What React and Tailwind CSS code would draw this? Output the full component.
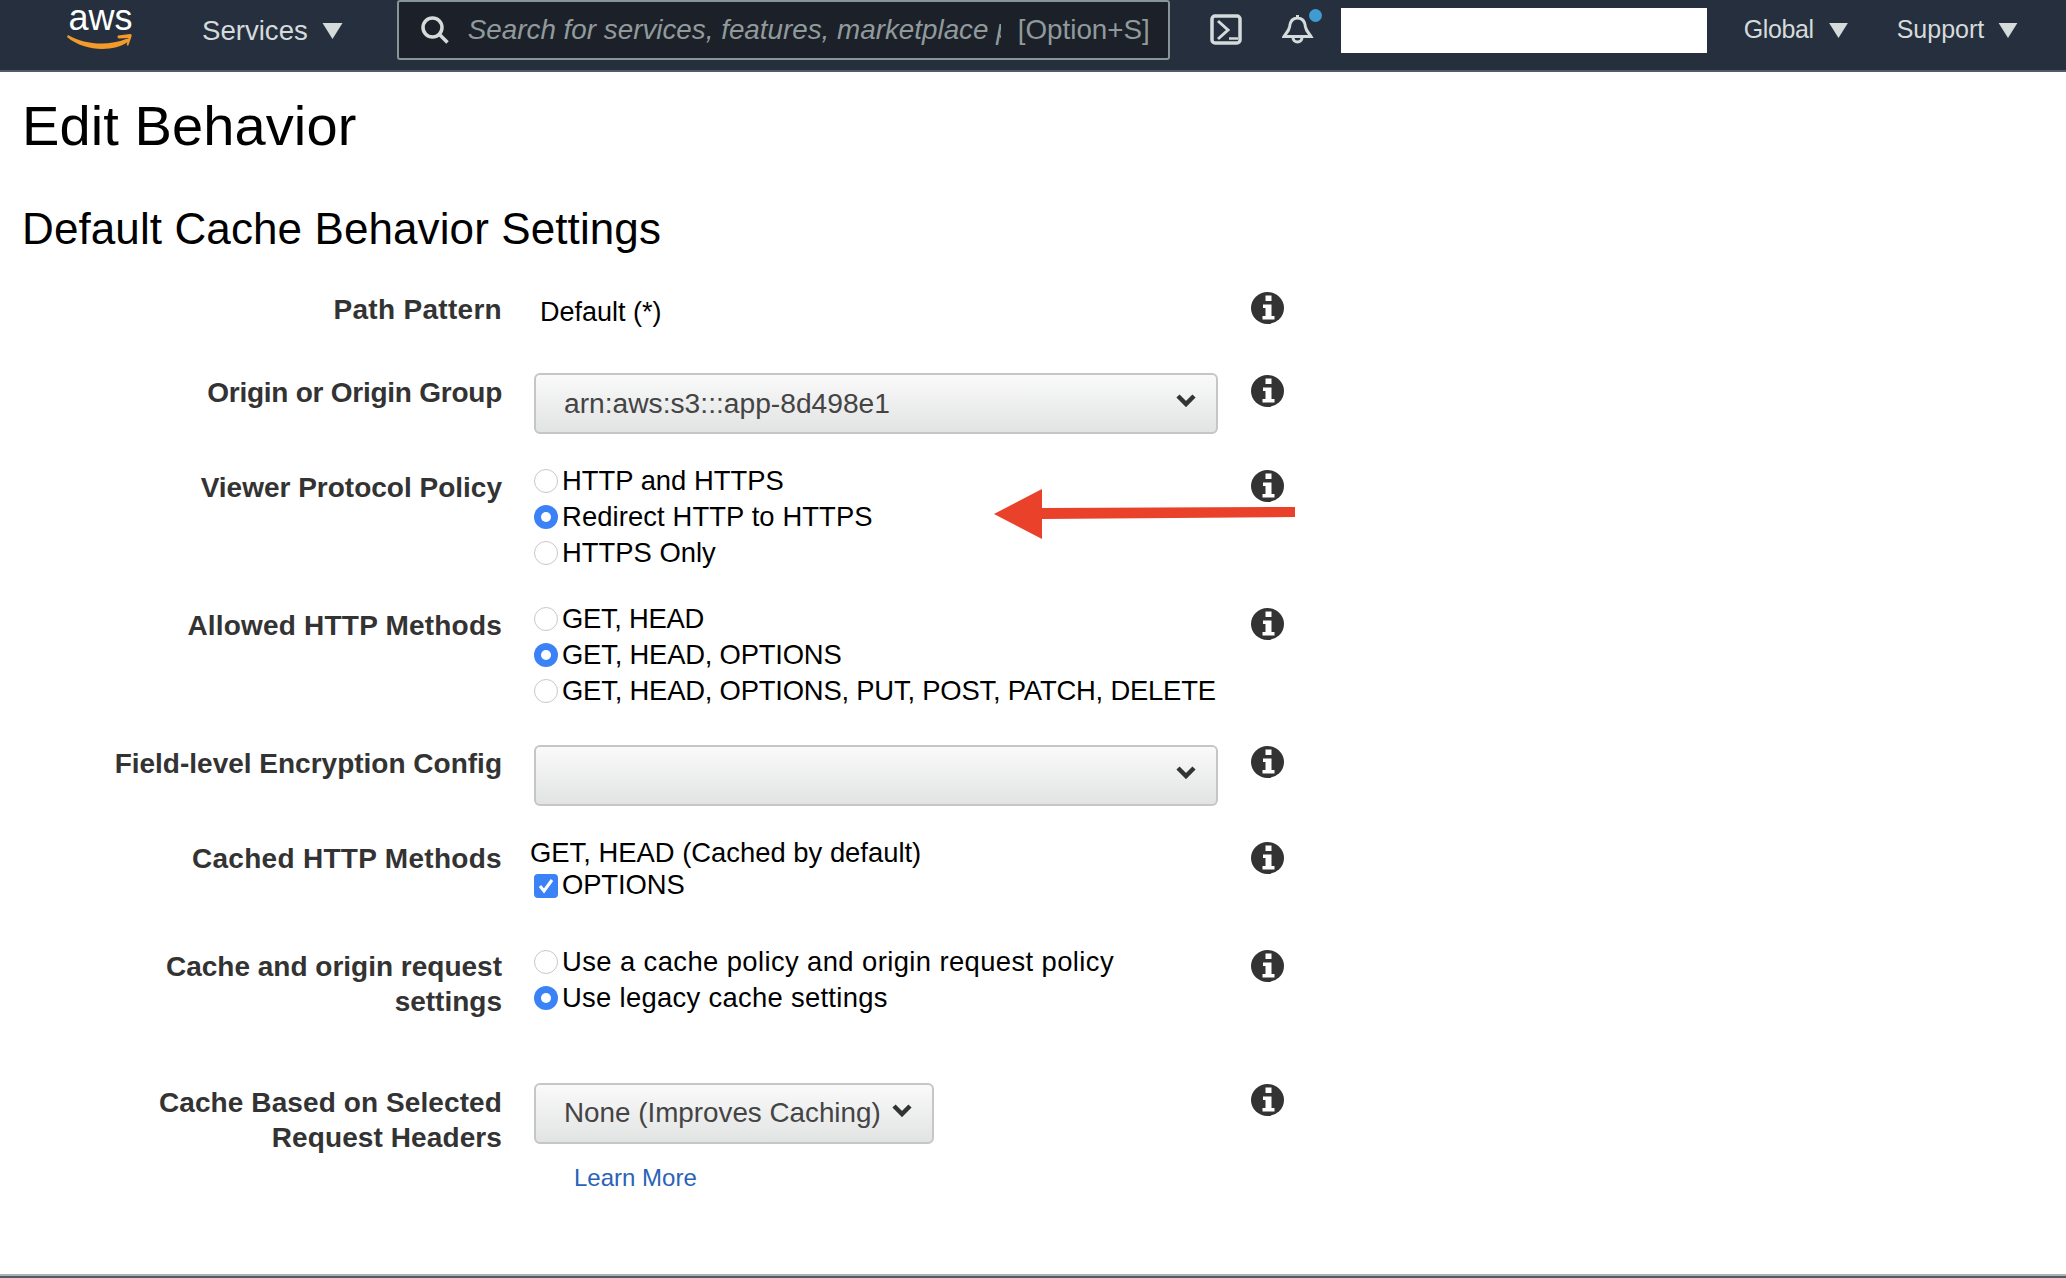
import React from 'react';

const Caret = ({ className }) => (
  <svg className={className} viewBox="0 0 20 16" fill="#d5dbdb">
    <path d="M0 0h20L10 16z" />
  </svg>
);

const Chevron = ({ className }) => (
  <svg className={className} viewBox="0 0 20 14" fill="none" stroke="#333" strokeWidth="4.5">
    <path d="M2 3l8 8 8-8" />
  </svg>
);

const InfoIcon = () => (
  <svg className="w-[33px] h-[32px]" viewBox="0 0 33 32">
    <ellipse cx="16.5" cy="16" rx="16.5" ry="16" fill="#333" />
    <path fill="#fff" d="M14.500 3.500h6v5.500h-6zM12 12.500h8.500v11.500h3v3.500h-12v-3.500h3v-8h-2.500z" />
  </svg>
);

const Radio = ({ checked, className = '', children }) => (
  <label className={`flex items-center h-9 text-[27.4px] text-black whitespace-nowrap ${className}`}>
    {checked ? (
      <span className="w-6 h-6 shrink-0 mr-[4px] rounded-full bg-[#3b82f6] flex items-center justify-center">
        <span className="w-[10px] h-[10px] rounded-full bg-white"></span>
      </span>
    ) : (
      <span className="w-6 h-6 shrink-0 mr-[4px] rounded-full bg-white border border-[#c8c8c8]"></span>
    )}
    {children}
  </label>
);

const Select = ({ value, className = '' }) => (
  <div className={`h-[61px] flex items-center justify-between pl-[28px] pr-[20px] rounded-md border-2 border-[#c6c6c6] bg-gradient-to-b from-[#fafafa] to-[#e2e3e3] text-[#444] ${className}`}>
    <span className="-mt-[1px]">{value}</span>
    <Chevron className="w-5 h-[14px] -mt-[7px]" />
  </div>
);

const Row = ({ height, label, labelTop, infoTop, labelClass = '', children }) => (
  <div className="flex items-start" style={{ height }}>
    <div className={`w-[480px] text-right font-bold text-[28px] leading-[35px] text-[#333] ${labelClass}`} style={{ paddingTop: labelTop }}>
      {label}
    </div>
    <div className="w-[684px] ml-[32px]">{children}</div>
    <div className="ml-[33px]" style={{ paddingTop: infoTop }}>
      <InfoIcon />
    </div>
  </div>
);

export default function App() {
  return (
    <div className="relative h-[1278px] flex flex-col bg-white overflow-hidden font-['Liberation_Sans',Arial,sans-serif]">
      {/* Top nav */}
      <nav className="h-[72px] shrink-0 flex items-start bg-[#252f3e] border-b-2 border-[#545b64]">
        <div className="w-[67px] shrink-0"></div>
        <div className="w-[67px] h-[52px] mt-[2px] shrink-0 flex flex-col items-center">
          <span className="text-[36px] leading-[32px] text-white">aws</span>
          <svg className="w-[67px] h-[16px]" viewBox="0 0 67 16" fill="#f39a2b">
            <path d="M1 1C18 11 42 12 59 5c2-1 4 1 2 3C46 18 18 18 0 3z" />
            <path d="M51 1.500l12-1.500c1.500 0 2 1 1.500 2.500l-3 8.500c-.5 1-2 .5-1.700-.5l1.500-6.500-9.500 .5c-1.500 0-1.500-2.500-.8-3z" />
          </svg>
        </div>
        <div className="flex items-center h-[62px] ml-[68px] text-[27.6px] text-[#d5dbdb]">
          <span>Services</span>
          <Caret className="w-[21px] h-[16px] ml-[14px]" />
        </div>
        <div className="flex items-center w-[773px] h-[60px] ml-[54px] pl-[21px] pr-[18px] rounded-[3px] border-2 border-[#879596] bg-[#1b2029] text-[27.8px] text-[#919a9b]">
          <svg className="w-[30px] h-[30px] shrink-0" viewBox="0 0 30 30" fill="none" stroke="#d5dbdb" strokeWidth="3.5">
            <circle cx="12.5" cy="12.5" r="9.5" />
            <path d="M19.500 19.500l8 8" />
          </svg>
          <span className="ml-[18px] w-[533px] shrink-0 overflow-hidden whitespace-nowrap italic">Search for services, features, marketplace products, and docs</span>
          <span className="ml-auto">[Option+S]</span>
        </div>
        <svg className="w-[32px] h-[31px] ml-[40px] mt-[14px] shrink-0" viewBox="0 0 32 31" fill="none" stroke="#d5dbdb">
          <rect x="2" y="2" width="28" height="27" rx="3" strokeWidth="3.5" />
          <path d="M8 7l10 9-10 9" strokeWidth="3" />
          <path d="M19 24.500h9" strokeWidth="2.500" />
        </svg>
        <div className="relative w-[32px] h-[32px] ml-[40px] mt-[14px] shrink-0">
          <svg className="w-[32px] h-[32px]" viewBox="0 0 32 32" fill="none" stroke="#d5dbdb" strokeWidth="3">
            <path d="M15.500 4C10 4 8 8 7.500 13 7 17 4 19 2 22.500h27C27 19 24 17 23.500 13 23 8 21 4 15.500 4zM15.500 1v3" />
            <path d="M11 23.500a4.500 4.500 0 1 0 9 0" />
          </svg>
          <span className="absolute top-[-5px] right-[-8px] w-[13px] h-[13px] rounded-full bg-[#3f9bd0]"></span>
        </div>
        <div className="w-[366px] h-[45px] ml-[27px] mt-[8px] bg-white shrink-0"></div>
        <div className="flex items-center h-[60px] ml-[37px] text-[25px] tracking-[-0.4px] text-[#d5dbdb]">
          <span>Global</span>
          <Caret className="w-[19px] h-[15px] ml-[15px]" />
        </div>
        <div className="flex items-center h-[60px] ml-[49px] text-[25px] text-[#d5dbdb]">
          <span>Support</span>
          <Caret className="w-[20px] h-[15px] ml-[14px]" />
        </div>
      </nav>

      {/* Page content */}
      <main className="flex-1 pl-[22px]">
        <h1 className="mt-[20px] h-[68px] text-[56px] tracking-[0.1px] leading-[68px] text-black">Edit Behavior</h1>
        <h2 className="mt-[41px] h-[56px] text-[44px] tracking-[0.1px] leading-[56px] text-black">Default Cache Behavior Settings</h2>

        <div className="mt-[35px]">
          <Row height={81} label="Path Pattern" labelTop={0} infoTop={0} labelClass="tracking-[0.3px]">
            <div className="ml-[6px] pt-[2px] text-[27px] leading-9 text-black">Default (*)</div>
          </Row>
          <Row height={90} label="Origin or Origin Group" labelTop={2} infoTop={2} labelClass="tracking-[-0.25px]">
            <Select value="arn:aws:s3:::app-8d498e1" className="text-[28.2px]" />
          </Row>
          <Row height={138} label="Viewer Protocol Policy" labelTop={7} infoTop={7}>
            <Radio>HTTP and HTTPS</Radio>
            <Radio checked className="tracking-[0.1px]">Redirect HTTP to HTTPS</Radio>
            <Radio>HTTPS Only</Radio>
          </Row>
          <Row height={144} label="Allowed HTTP Methods" labelTop={7} infoTop={7} labelClass="tracking-[0.2px]">
            <Radio className="tracking-[-0.3px]">GET, HEAD</Radio>
            <Radio checked className="tracking-[-0.2px]">GET, HEAD, OPTIONS</Radio>
            <Radio className="tracking-[-0.2px]">GET, HEAD, OPTIONS, PUT, POST, PATCH, DELETE</Radio>
          </Row>
          <Row height={89} label="Field-level Encryption Config" labelTop={1} infoTop={1}>
            <Select value="" />
          </Row>
          <Row height={110} label="Cached HTTP Methods" labelTop={7} infoTop={8} labelClass="tracking-[0.3px]">
            <div className="-ml-1 mt-[3px] h-8 text-[27.4px] leading-8 text-black whitespace-nowrap">GET, HEAD (Cached by default)</div>
            <div className="flex items-center h-8 text-[27.4px] tracking-[-0.1px] text-black">
              <span className="w-6 h-6 mt-[2px] mr-[4px] rounded-[4px] bg-[#3b82f6] flex items-center justify-center">
                <svg className="w-4 h-4" viewBox="0 0 16 16" fill="none" stroke="#fff" strokeWidth="3">
                  <path d="M2 8l4 5 8-11" />
                </svg>
              </span>
              OPTIONS
            </div>
          </Row>
          <Row height={139} label={<>Cache and origin request<br />settings</>} labelTop={5} infoTop={6}>
            <Radio className="tracking-[0.4px]">Use a cache policy and origin request policy</Radio>
            <Radio checked className="tracking-[0.3px]">Use legacy cache settings</Radio>
          </Row>
          <Row height={120} label={<>Cache Based on Selected<br />Request Headers</>} labelTop={2} infoTop={1} labelClass="tracking-[0.1px]">
            <Select value="None (Improves Caching)" className="w-[400px] text-[27.8px]" />
            <a className="block mt-[19px] ml-[40px] text-[24px] leading-[30px] text-[#2a62b8]">Learn More</a>
          </Row>
        </div>
      </main>

      {/* Footer edge */}
      <div className="h-1 shrink-0 bg-[#545b64] border-t-2 border-[#aab2b2]"></div>

      {/* Annotation arrow */}
      <svg className="absolute left-[990px] top-[485px] w-[310px] h-[60px]" viewBox="0 0 310 60" fill="#e9412a">
        <path d="M4 29L52 4v19l253-1v10l-253 2v20z" />
      </svg>
    </div>
  );
}
